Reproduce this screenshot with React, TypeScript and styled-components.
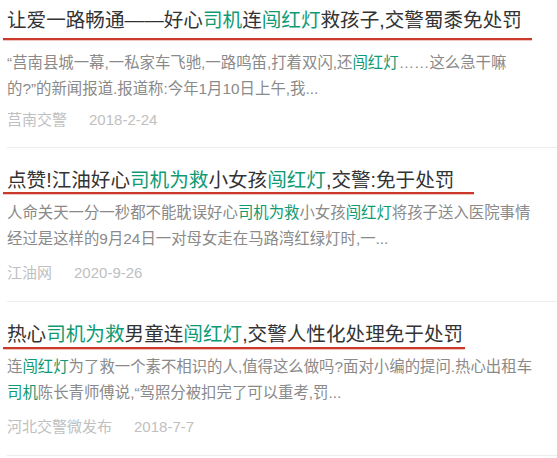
import React from 'react';
import styled, { createGlobalStyle } from 'styled-components';

type Item = {
  title: string;
  body: string[];
  source: string;
  date: string;
  tail: number;
  drop: number;
  bodyGap: number;
  metaGap: number;
};

const items: Item[] = [
  {
    title: '让爱一路畅通——好心司机连闯红灯救孩子,交警蜀黍免处罚',
    body: [
      '“莒南县城一幕,一私家车飞驰,一路鸣笛,打着双闪,还闯红灯……这么急干嘛',
      '的?”的新闻报道.报道称:今年1月10日上午,我...',
    ],
    source: '莒南交警',
    date: '2018-2-24',
    tail: 10,
    drop: 6,
    bodyGap: 16,
    metaGap: 8,
  },
  {
    title: '点赞!江油好心司机为救小女孩闯红灯,交警:免于处罚',
    body: [
      '人命关天一分一秒都不能耽误好心司机为救小女孩闯红灯将孩子送入医院事情',
      '经过是这样的9月24日一对母女走在马路湾红绿灯时,一...',
    ],
    source: '江油网',
    date: '2020-9-26',
    tail: 20,
    drop: 0,
    bodyGap: 6,
    metaGap: 11,
  },
  {
    title: '热心司机为救男童连闯红灯,交警人性化处理免于处罚',
    body: [
      '连闯红灯为了救一个素不相识的人,值得这么做吗?面对小编的提问.热心出租车',
      '司机陈长青师傅说,“驾照分被扣完了可以重考,罚...',
    ],
    source: '河北交警微发布',
    date: '2018-7-7',
    tail: 2,
    drop: 1,
    bodyGap: 6,
    metaGap: 11,
  },
];

const highlight = (text: string) =>
  text.split(/(司机为救|司机|闯红灯)/).map((part, i) =>
    i % 2 === 1 ? <Hl key={i}>{part}</Hl> : <React.Fragment key={i}>{part}</React.Fragment>,
  );

export default function App() {
  return (
    <>
      <GlobalStyle />
      <List>
        {items.map((item, idx) => (
          <Entry key={idx} $first={idx === 0}>
            <Title>
              <Marked $tail={item.tail} $drop={item.drop}>
                {highlight(item.title)}
              </Marked>
            </Title>
            <Summary $gap={item.bodyGap}>
              {item.body.map((line, i) => (
                <Line key={i}>{highlight(line)}</Line>
              ))}
            </Summary>
            <Meta $gap={item.metaGap}>
              <span>{item.source}</span>
              <span>{item.date}</span>
            </Meta>
          </Entry>
        ))}
      </List>
    </>
  );
}

const GlobalStyle = createGlobalStyle`
  html, body {
    margin: 0;
    padding: 0;
    background: #fff;
  }
  body {
    font-family: "Liberation Sans", "Noto Sans CJK SC", sans-serif;
  }
`;

// list is scrolled a little, so the first entry is cut at the top
const List = styled.div`
  margin-top: -12px;
  padding-left: 7px;
`;

const Entry = styled.div<{ $first: boolean }>`
  padding: 18px 0 ${p => (p.$first ? 17 : 18)}px;
  border-bottom: 1px solid #ececec;
`;

const Title = styled.div`
  font-size: 19.6px;
  line-height: 28px;
  height: 28px;
  color: #333;
  white-space: nowrap;
`;

const Marked = styled.span<{ $tail: number; $drop: number }>`
  display: inline-block;
  line-height: 24px;
  margin-left: -4px;
  padding: 0 ${p => p.$tail}px ${p => p.$drop}px 4px;
  border-bottom: 2px solid #cc3a2c;
  box-shadow: 0 1px 0 rgba(204, 58, 44, 0.3);
`;

const Hl = styled.span`
  color: #0f9a73;
`;

const Summary = styled.div<{ $gap: number }>`
  margin-top: ${p => p.$gap}px;
  font-size: 15.4px;
  line-height: 26px;
  color: #8a8a8a;
`;

const Line = styled.div`
  white-space: nowrap;
`;

const Meta = styled.div<{ $gap: number }>`
  display: flex;
  gap: 22px;
  margin-top: ${p => p.$gap}px;
  font-size: 15px;
  line-height: 20px;
  color: #c0c0c0;
`;
